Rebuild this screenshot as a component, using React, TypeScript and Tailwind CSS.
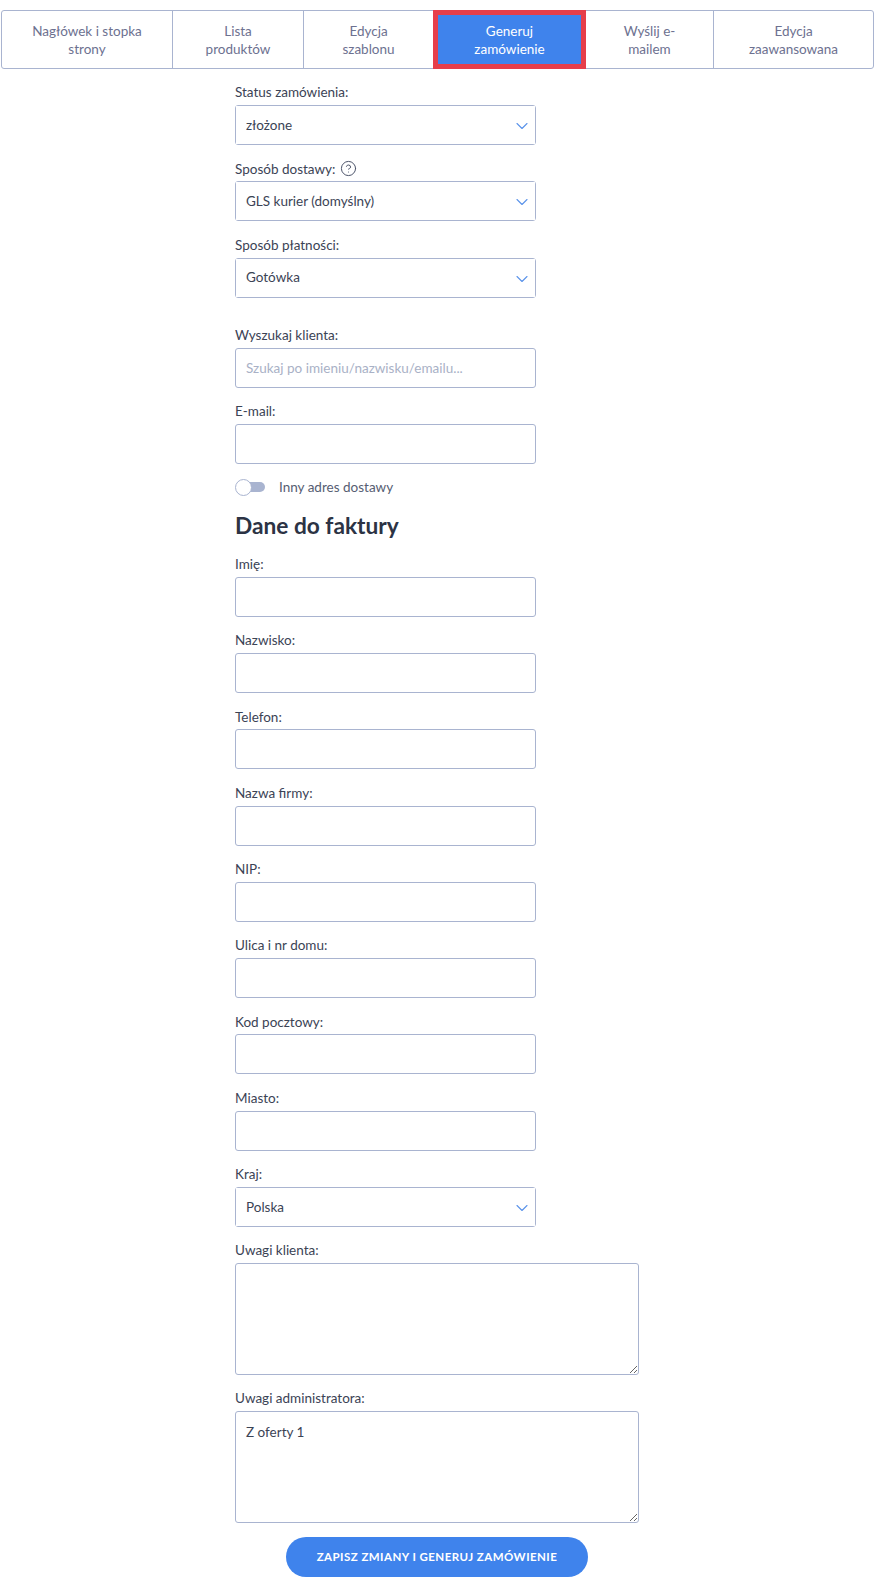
import { ChevronDown, CircleHelp } from "lucide-react";

const TABS = [
  { label: "Nagłówek i stopka strony", width: "w-[171px]" },
  { label: "Lista produktów", width: "w-[131px]" },
  { label: "Edycja szablonu", width: "w-[130px]" },
  { label: "Generuj zamówienie", width: "w-[153px]", active: true },
  { label: "Wyślij e-mailem", width: "w-[128px]" },
  { label: "Edycja zaawansowana", width: "flex-1" },
];

const BORDER = "border border-[#a9b4d0] rounded-[3px]";

function Label({ children }: { children: React.ReactNode }) {
  return <label className="flex h-[21px] items-center pt-[4px] text-[#3b4355]">{children}</label>;
}

function SelectField({ label, value, hint }: { label: string; value: string; hint?: boolean }) {
  return (
    <div className="mb-[11.25px] w-[301px]">
      <div className="mb-[4px] flex items-center gap-[5px]">
        <Label>{label}</Label>
        {hint && <CircleHelp size={17} strokeWidth={1.4} className="mt-[3px] text-[#4b5268]" />}
      </div>
      <div className={`relative h-10 ${BORDER}`}>
        <select
          defaultValue={value}
          className="h-full w-full appearance-none bg-white pl-[10px] pr-8 text-[#3b4355] outline-none"
        >
          <option>{value}</option>
        </select>
        <ChevronDown
          size={20}
          strokeWidth={1.3}
          className="pointer-events-none absolute right-[3px] top-[10px] text-[#5b93ea]"
        />
      </div>
    </div>
  );
}

function InputField({ label, placeholder }: { label: string; placeholder?: string }) {
  return (
    <div className="mb-[11.25px] w-[301px]">
      <div className="mb-[4px]">
        <Label>{label}</Label>
      </div>
      <input
        placeholder={placeholder}
        className={`h-10 w-full bg-white px-[10px] text-[#3b4355] outline-none placeholder:text-[#a9b1c6] ${BORDER}`}
      />
    </div>
  );
}

function AreaField({ label, value }: { label: string; value?: string }) {
  return (
    <div className="mb-[11px] w-[404px]">
      <div className="mb-[4px]">
        <Label>{label}</Label>
      </div>
      <textarea
        defaultValue={value}
        className={`block h-[112px] w-full bg-white px-[10px] py-[10px] text-[#3b4355] outline-none ${BORDER}`}
      />
    </div>
  );
}

export default function App() {
  return (
    <div className="min-h-[1589px] bg-white pt-[10px] font-['Lato','Liberation_Sans',sans-serif] text-[13.5px]">
      <nav className={`mx-[1px] flex h-[59px] ${BORDER}`}>
        {TABS.map((t) => (
          <button
            key={t.label}
            type="button"
            className={
              t.active
                ? `-my-px -ml-px flex items-center justify-center border-[5px] border-[#e63e4a] bg-[#3f83ec] px-[30px] text-center leading-[18px] text-white ${t.width}`
                : `flex items-center justify-center border-r border-[#a9b4d0] px-[28px] text-center leading-[18px] text-[#6d7190] last:border-r-0 ${t.width}`
            }
          >
            {t.label}
          </button>
        ))}
      </nav>

      <form className="ml-[235px] pt-[11px]">
        <SelectField label="Status zamówienia:" value="złożone" />
        <SelectField label="Sposób dostawy:" value="GLS kurier (domyślny)" hint />
        <SelectField label="Sposób płatności:" value="Gotówka" />
        <div className="h-[14px]" />
        <InputField label="Wyszukaj klienta:" placeholder="Szukaj po imieniu/nazwisku/emailu..." />
        <InputField label="E-mail:" />

        <div className="mt-[3px] flex h-[24px] items-center">
          <div className="relative h-[17px] w-[30px]">
            <div className="absolute left-[5px] right-0 top-[3px] h-[10px] rounded-full bg-[#a9b4d0]" />
            <div className="absolute left-0 top-0 h-[17px] w-[17px] rounded-full border border-[#a9b4d0] bg-white" />
          </div>
          <span className="ml-[14px] text-[#565d72]">Inny adres dostawy</span>
        </div>

        <h2 className="mb-[9.5px] mt-[11px] text-[22.7px] font-bold leading-[32px] text-[#2c3344]">Dane do faktury</h2>

        <InputField label="Imię:" />
        <InputField label="Nazwisko:" />
        <InputField label="Telefon:" />
        <InputField label="Nazwa firmy:" />
        <InputField label="NIP:" />
        <InputField label="Ulica i nr domu:" />
        <InputField label="Kod pocztowy:" />
        <InputField label="Miasto:" />
        <SelectField label="Kraj:" value="Polska" />
        <AreaField label="Uwagi klienta:" />
        <AreaField label="Uwagi administratora:" value="Z oferty 1" />

        <div className="mt-[14px] w-[404px] pl-[51px]">
          <button
            type="button"
            className="h-10 w-[302px] rounded-full bg-[#3f83ec] text-[11.5px] font-bold tracking-[0.45px] text-white"
          >
            ZAPISZ ZMIANY I GENERUJ ZAMÓWIENIE
          </button>
        </div>
      </form>
    </div>
  );
}
